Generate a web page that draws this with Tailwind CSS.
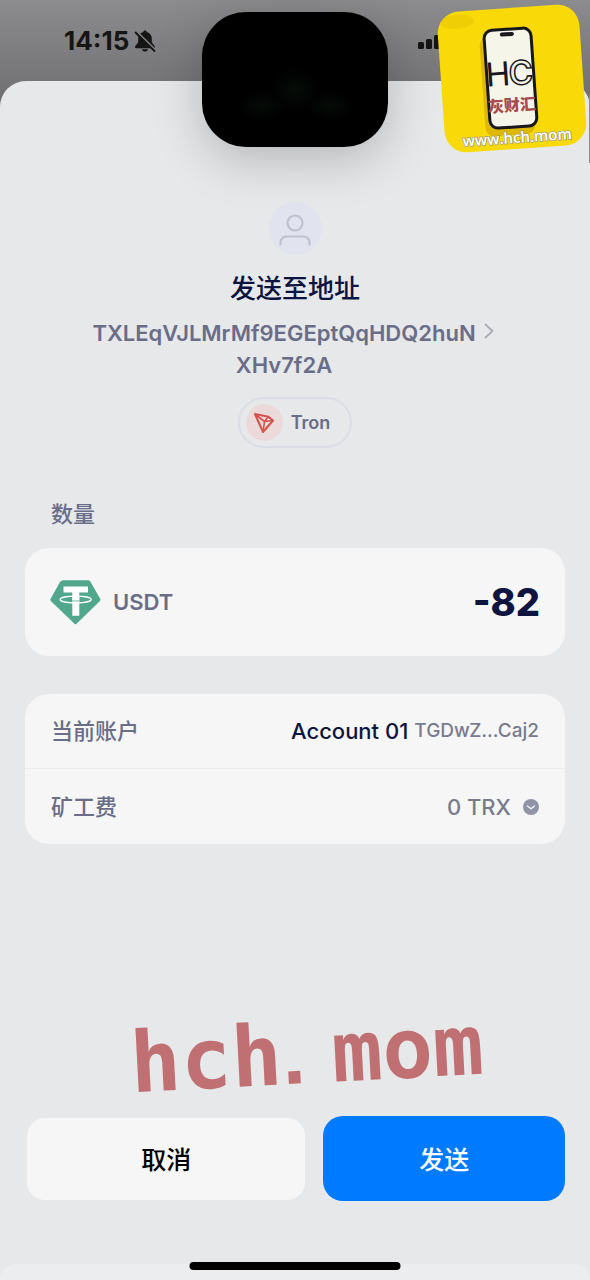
<!DOCTYPE html>
<html lang="zh-CN">
<head>
  <meta charset="UTF-8" />
  <meta name="viewport" content="width=device-width, initial-scale=1.0" />
  <title>发送至地址</title>
  <script src="https://cdn.jsdelivr.net/npm/@tailwindcss/browser@4"></script>
</head>
<body class="bg-[#858587] font-['Inter','Noto_Sans_CJK_SC',sans-serif]">
<div class="relative flex min-h-screen flex-col overflow-hidden bg-linear-to-b from-[#8c8c8e] to-[#707072] to-[100px]">

  <!-- status bar -->
  <header class="flex h-[81px] items-center gap-1 pl-16 text-[#151515]">
    <span class="text-[26px] font-bold">14:15</span>
    <svg class="h-6 w-6" viewBox="0 0 24 24" fill="currentColor">
      <path d="M12 1.500c-1 0-1.700.7-1.800 1.600C7 3.900 5.200 6.500 5.200 9.500v3.700L2.200 17.300c-.6.9 0 1.900 1 1.900h17.600c1 0 1.600-1 1-1.900l-3-4.100V9.500c0-3-1.800-5.600-5-6.400-.1-.9-.8-1.600-1.800-1.600zM9 20.200h6c-.3 1.500-1.500 2.400-3 2.400s-2.700-.9-3-2.400z" />
      <path d="M3.500 2.500l19 18.500" stroke="#7f7f81" stroke-width="2" />
      <path d="M2.500 3.500l19 18.500" stroke="currentColor" stroke-width="1.800" stroke-linecap="round" />
    </svg>
    <svg class="mr-[140px] ml-auto h-4 w-8" viewBox="0 0 32 16" fill="currentColor">
      <rect x="0" y="9" width="6" height="7" rx="1.500" />
      <rect x="8" y="6" width="6" height="10" rx="1.500" />
      <rect x="16" y="2" width="6" height="14" rx="1.500" />
      <rect x="24" y="0" width="6" height="16" rx="1.500" />
    </svg>
  </header>

  <!-- confirm sheet -->
  <main class="flex flex-1 flex-col rounded-t-[26px] bg-[#e6e8ea] text-[#696d88]">
    <section class="flex flex-col items-center pt-[121px]">
      <div class="flex size-[53px] items-center justify-center rounded-full bg-[#e1e3ee]">
        <svg class="size-9" viewBox="0 0 36 36" fill="none" stroke="#bfc1d0" stroke-width="2.200" stroke-linecap="round">
          <circle cx="18" cy="12" r="7.500" />
          <path d="M3.500 33.500v-2a6 6 0 0 1 6-6h17a6 6 0 0 1 6 6v2" />
        </svg>
      </div>
      <h1 class="mt-4 text-[26px] leading-9 font-medium text-[#0d1440]">发送至地址</h1>
      <a href="#" class="mt-2.5 flex gap-2 pr-1 text-[22px] leading-8 font-semibold">
        <span class="text-center">TXLEqVJLMrMf9EGEptQqHDQ2huN<br />XHv7f2A</span>
        <svg class="mt-1.5 h-4 w-2.5" viewBox="0 0 10 16" fill="none" stroke="#a9abb5" stroke-width="1.800" stroke-linecap="round" stroke-linejoin="round">
          <path d="M1.500 1.500L8.500 8l-7 6.500" />
        </svg>
      </a>
      <div class="mt-4 flex h-[51px] items-center gap-2 rounded-full border-2 border-[#dbdde4] pr-5 pl-1.5">
        <span class="flex size-[37px] items-center justify-center rounded-full bg-[#ecd9da]">
          <svg class="size-5" viewBox="0 0 20 20" fill="none" stroke="#d5524d" stroke-width="2" stroke-linejoin="round">
            <path d="M1 1l13.500 2.700L19 7.500 9 19z" />
            <path d="M1 1l9.500 7.500L9 19M10.500 8.500l4-4.800M10.500 8.500L19 7.500" stroke-width="1.600" />
          </svg>
        </span>
        <span class="text-lg font-semibold">Tron</span>
      </div>
    </section>

    <section class="mt-[50px] px-[25px]">
      <h2 class="px-[26px] text-[22px] leading-8 font-medium">数量</h2>
      <div class="mt-[18px] flex h-[108px] items-center rounded-3xl bg-[#f6f6f6] px-[25px]">
        <svg class="h-[45px] w-[51px]" viewBox="0 0 51 45">
          <path d="M11.500.8Q12.300.3 13.300.3H38q1.500 0 2.300 1.200L50.300 19q.6 1.100-.3 2L26.500 43.800q-1 1-2 0L.8 21q-.9-.9-.3-2L10 2z" fill="#50a78c" />
          <path d="M13.500 6.500h24.500v6H29.300v23.300h-7V12.500h-8.800z" fill="#fff" />
          <ellipse cx="25.700" cy="19.500" rx="15.500" ry="3.300" fill="none" stroke="#fff" stroke-width="1.300" />
          <path d="M22.300 17.500h7v3.500h-7z" fill="#fff" />
          <path d="M22.300 20.800q3.500.4 7 0" fill="none" stroke="#50a78c" stroke-width=".8" />
        </svg>
        <span class="ml-3 text-[22px] leading-8 font-semibold">USDT</span>
        <strong class="ml-auto text-[38px] font-extrabold text-[#0d1440]">-82</strong>
      </div>

      <dl class="mt-[38px] divide-y divide-[#ebecee] rounded-3xl bg-[#f6f6f6] text-[22px] leading-8">
        <div class="flex h-[75px] items-center justify-between px-[26px]">
          <dt class="font-medium">当前账户</dt>
          <dd class="flex items-center gap-1.5">
            <span class="font-medium text-[#0d1440]">Account 01</span>
            <span class="text-[19px] font-medium text-[#787b8e]">TGDwZ...Caj2</span>
          </dd>
        </div>
        <div class="flex h-[75px] items-center justify-between px-[26px]">
          <dt class="font-medium">矿工费</dt>
          <dd class="flex items-center gap-3 font-medium text-[#787b8e]">
            0 TRX
            <button type="button" aria-label="矿工费">
              <svg class="size-4" viewBox="0 0 16 16" fill="none">
                <circle cx="8" cy="8" r="8" fill="#9194a6" />
                <path d="M4.500 7L8 9.800 11.500 7" stroke="#f5f6f6" stroke-width="1.400" stroke-linecap="round" stroke-linejoin="round" />
              </svg>
            </button>
          </dd>
        </div>
      </dl>
    </section>

    <div class="mt-auto flex justify-center pl-6">
      <p class="-rotate-3 font-['DejaVu_Sans_Mono',monospace] text-[84px] leading-[84px] font-bold text-[#c07072]">hch<span class="inline-block w-[50px] font-['Liberation_Sans',sans-serif]">.</span>mom</p>
    </div>

    <div class="mt-5 flex items-center gap-[18px] pr-[25px] pb-[63px] pl-[27px] text-[25px] font-medium">
      <button type="button" class="h-[82px] flex-[279] rounded-[18px] bg-[#f6f6f6] pt-1 text-black">取消</button>
      <button type="button" class="h-[85px] flex-[242] rounded-[20px] bg-[#007aff] pt-1 text-white">发送</button>
    </div>

    <footer class="relative h-4 rounded-t-[26px] bg-[#ecedef]">
      <div class="absolute -top-0.5 left-1/2 h-2 w-[211px] -translate-x-1/2 rounded-full bg-black"></div>
    </footer>
  </main>

  <!-- face unlock island -->
  <div class="absolute top-3 left-1/2 h-[135px] w-[186px] -translate-x-1/2 rounded-[44px] bg-black shadow-[0_12px_50px_rgba(0,0,0,0.22)]">
    <svg class="size-full" viewBox="0 0 186 135">
      <defs>
        <radialGradient id="glow">
          <stop offset="0" stop-color="#060c08" />
          <stop offset="1" stop-color="#060c08" stop-opacity="0" />
        </radialGradient>
      </defs>
      <ellipse cx="60" cy="94" rx="24" ry="14" fill="url(#glow)" />
      <ellipse cx="128" cy="94" rx="24" ry="14" fill="url(#glow)" />
      <ellipse cx="93" cy="78" rx="24" ry="22" fill="url(#glow)" />
    </svg>
  </div>

  <!-- sticker -->
  <div class="absolute top-2 right-[7px] h-[141px] w-[142px] rotate-[-4deg] overflow-hidden rounded-[22px] bg-[#f9d908]">
    <svg class="size-full" viewBox="0 0 142 141">
      <ellipse cx="20" cy="10" rx="17" ry="7" fill="#efce05" />
      <rect x="41" y="27" width="50" height="100" rx="9" fill="#dfb900" />
      <rect x="46" y="21" width="47" height="98" rx="8" fill="#f6f5ea" stroke="#17171c" stroke-width="3" />
      <rect x="62" y="24" width="14" height="4" rx="2" fill="#17171c" />
      <text x="45" y="77" font-family="Inter, sans-serif" font-size="33" fill="#17171c">H</text>
      <text x="68" y="77" font-family="Inter, sans-serif" font-size="33" font-weight="600" fill="#f6f5ea" stroke="#17171c" stroke-width="1.500">C</text>
      <text x="45" y="103" font-family="Noto Sans CJK SC, sans-serif" font-size="16" font-weight="900" fill="#a84a50">灰财汇</text>
      <text x="72" y="135" text-anchor="middle" font-family="Open Sans, sans-serif" font-size="15" font-weight="600" fill="#fff" stroke="#9c9a78" stroke-width="1.500" paint-order="stroke">www.hch.mom</text>
    </svg>
  </div>
  <div class="absolute top-[95px] right-0 h-[68px] w-px bg-[#8c8c8e]"></div>
</div>
</body>
</html>
